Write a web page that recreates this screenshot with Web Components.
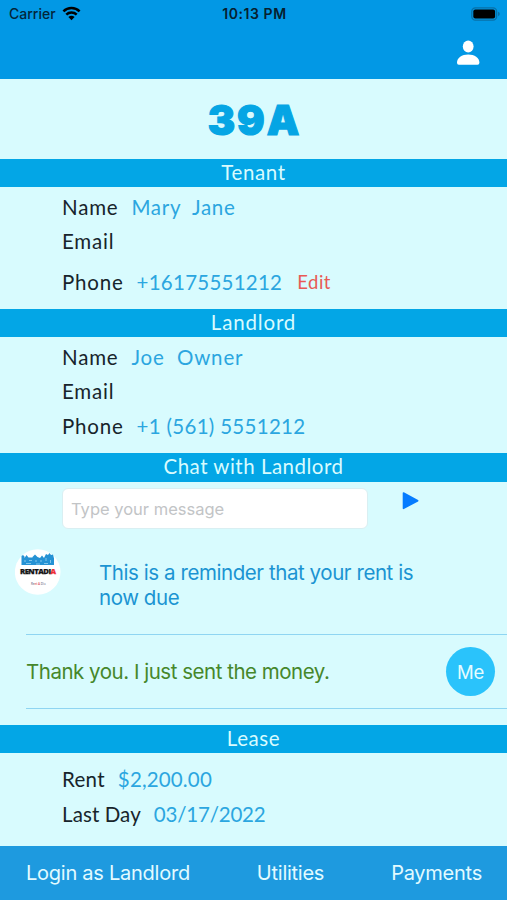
<!DOCTYPE html>
<html lang="en">
<head>
<meta charset="utf-8">
<title>Rentadia</title>
<style>
  body {
    margin: 0;
    background: #d8fbfe;
  }
</style>
</head>
<body>
<rent-app></rent-app>

<script>
// small helper, every element below is a template cloned in its shadow root
const define = (name, html) => {
    const template = document.createElement("template");
    template.innerHTML = html;
    customElements.define(name, class extends HTMLElement {
        constructor() {
            super();
            this.attachShadow({ mode: "open" });
            this.shadowRoot.appendChild(template.content.cloneNode(true));
        }
    });
};

define("status-bar", /*html*/`
  <style>
  :host {
    display: grid;
    grid-template-columns: 1fr auto 1fr;
    align-items: center;
    height: 28px;
    padding: 0 7px 0 9px;
    color: #03263a;
    font: 500 14px/28px Inter, sans-serif;
  }
  .carrier { display: flex; align-items: center; gap: 6px; }
  .time { font-weight: 600; color: #06202f; letter-spacing: 0.55px; }
  .battery { justify-self: end; }
  svg { display: block; margin-top: -1px; }
  </style>
  <div class="carrier">
    <span>Carrier</span>
    <svg width="19" height="15" viewBox="0 0 19 15">
      <g fill="none" stroke="#000" stroke-width="2.5">
        <path d="M1.400 5.300a11.600 11.600 0 0 1 16.200 0"/>
        <path d="M4.300 8.600a7.400 7.400 0 0 1 10.400 0"/>
      </g>
      <path d="M9.500 14.300 6.400 11.100a4.500 4.500 0 0 1 6.200 0Z" fill="#000"/>
    </svg>
  </div>
  <span class="time">10:13 PM</span>
  <svg class="battery" width="29" height="14" viewBox="0 0 29 14">
    <rect x=".8" y=".8" width="24.8" height="12.4" rx="3.6" fill="none" stroke="#0870a8" stroke-width="1.3"/>
    <rect x="2.3" y="2.4" width="21.8" height="9.2" rx="2" fill="#000"/>
    <path d="M27 4.800q1.800.6 1.800 2.200T27 9.200Z" fill="#0870a8"/>
  </svg>
`);

define("nav-bar", /*html*/`
  <style>
  :host {
    display: flex;
    justify-content: flex-end;
    height: 51px;
    padding: 12px 27px 0 0;
    box-sizing: border-box;
  }
  </style>
  <svg width="24" height="26" viewBox="0 0 24 26" fill="#fff">
    <ellipse cx="12.2" cy="6.5" rx="5.4" ry="5.9"/>
    <path d="M1 22.800C1 17.800 5.800 14.600 12.200 14.600S23.400 17.800 23.400 22.800Q23.400 24.800 21.600 24.800H2.800Q1 24.800 1 22.800Z"/>
  </svg>
`);

define("section-bar", /*html*/`
  <style>
  :host {
    display: block;
    height: 28.5px;
    background: #03a6e6;
    color: #d8fbfe;
    font: 400 20.5px/26px Lato, sans-serif;
    letter-spacing: var(--track, 0.6px);
    text-align: center;
  }
  </style>
  <slot></slot>
`);

define("info-row", /*html*/`
  <style>
  :host {
    display: flex;
    align-items: center;
    height: 34.5px;
    padding-left: 62px;
    color: #17242b;
    font: 400 20.5px/34px Lato, sans-serif;
    letter-spacing: var(--label-track, 0.8px);
    white-space: pre;
  }
  ::slotted([slot=value]) {
    margin-left: 13px;
    color: #2ba6e0;
    letter-spacing: var(--track, 0.7px);
  }
  ::slotted([slot=action]) {
    margin-left: 15px;
    color: #e85a55;
    font-size: 18.5px;
    letter-spacing: 0.5px;
  }
  </style>
  <slot></slot><slot name="value"></slot><slot name="action"></slot>
`);

define("message-box", /*html*/`
  <style>
  :host {
    display: flex;
    gap: 34px;
    padding: 6px 0 0 62px;
  }
  .field {
    box-sizing: border-box;
    width: 306px;
    height: 41.5px;
    padding-left: 8px;
    border: 1px solid #d9eff2;
    border-radius: 6px;
    background: #fff;
    color: #c2c4c6;
    font: 400 16.5px/41px Inter, sans-serif;
  }
  svg { margin-top: 3px; }
  </style>
  <div class="field"><slot></slot></div>
  <svg width="18" height="20" viewBox="0 0 18 20">
    <path d="M1.500 2 15.700 9.700 1.500 17.400Z" fill="#067cff" stroke="#067cff" stroke-width="1.6" stroke-linejoin="round"/>
  </svg>
`);

define("rentadia-logo", /*html*/`
  <style>
  :host { display: block; width: 46px; height: 46px; }
  svg { display: block; }
  </style>
  <svg width="46" height="46" viewBox="0 0 46 46">
    <circle cx="22.700" cy="23" r="22.800" fill="#fff"/>
    <path d="M6.500 16V7L8 6l1.500 1.500V9l2-3 2 2.500h4V8L20 5.500 22.500 8 25 9l2-2.500L29 9l2-4 2 1 1.500-2L36 6l2-.5 1 4V16Z" fill="#2592d4"/>
    <path d="M9 12h2M14 11.500h3M20 12h2M25 12h2M31 9v3M35.500 11v3M11 14.500h5M21 15h4M29 14.500h4" stroke="#a9dcf5" stroke-width=".7"/>
    <text x="5" y="25.300" font-family="Open Sans, sans-serif" font-weight="800" font-size="6.600" textLength="35.600" lengthAdjust="spacingAndGlyphs" fill="#151515" stroke="#151515" stroke-width=".25">RENTADI<tspan fill="#ee2b35" stroke="#ee2b35">A</tspan></text>
    <text x="16" y="35.500" font-family="Lato, sans-serif" font-weight="700" font-size="3" textLength="14" fill="#8e8ea0">Re<tspan fill="#e05a66">nt A</tspan> Dia</text>
  </svg>
`);

define("chat-message", /*html*/`
  <style>
  :host {
    display: flex;
    box-sizing: border-box;
    font: 400 20.5px/24.5px Inter, sans-serif;
  }
  :host([from=them]) {
    height: 105px;
    padding: 20px 80px 0 15px;
    gap: 38px;
    color: #1b94d2;
    letter-spacing: -0.43px;
  }
  :host([from=them]) .text { padding-top: 12px; }
  :host([from=me]) {
    height: 73px;
    padding: 12px 12px 0 26px;
    justify-content: space-between;
    color: #46872b;
    letter-spacing: -0.48px;
  }
  :host([from=me]) .text { padding-top: 13px; }
  .text { white-space: pre-line; }
  </style>
  <slot name="before"></slot>
  <div class="text"><slot></slot></div>
  <slot name="after"></slot>
`);

define("me-badge", /*html*/`
  <style>
  :host {
    display: block;
    width: 49px;
    height: 49px;
    border-radius: 50%;
    background: #2ac3fb;
    color: #e6fcff;
    font: 400 18.5px/51px Inter, sans-serif;
    letter-spacing: -0.2px;
    text-align: center;
  }
  </style>
  Me
`);

define("line-separator", /*html*/`
  <style>
  :host { display: block; height: 1px; margin-left: 26px; background: #8fd5f2; }
  </style>
`);

define("tab-bar", /*html*/`
  <style>
  :host {
    display: flex;
    justify-content: space-between;
    height: 54px;
    padding: 0 25px 0 26px;
    background: #1e9adf;
    color: #e2fbff;
    font: 400 20px/55px Inter, sans-serif;
    letter-spacing: -0.25px;
    white-space: nowrap;
  }
  </style>
  <slot></slot>
`);

define("rent-app", /*html*/`
  <style>
  :host {
    display: flex;
    flex-direction: column;
    width: 507px;
    height: 900px;
    overflow: hidden;
    background: #d8fbfe;
  }
  header { height: 79px; background: #0298e5; }
  h1 {
    margin: 0;
    height: 79.5px;
    color: #05a5e4;
    font: 900 41px/82px Inter, sans-serif;
    letter-spacing: 2px;
    text-indent: 2px;
    text-align: center;
    -webkit-text-stroke: 1.2px #05a5e4;
  }
  .rows { box-sizing: border-box; padding-top: 2.5px; }
  .tenant { height: 121.5px; }
  .landlord { height: 116px; }
  .chat { height: 243px; }
  .lease { height: 93px; padding-top: 9px; }
  .tall { height: 47px; }
  </style>
  <header>
    <status-bar></status-bar>
    <nav-bar></nav-bar>
  </header>
  <h1>39A</h1>

  <section-bar>Tenant</section-bar>
  <div class="rows tenant">
    <info-row>Name<span slot="value">Mary&nbsp; Jane</span></info-row>
    <info-row>Email</info-row>
    <info-row class="tall" style="--track: 0.25px">Phone<span slot="value">+16175551212</span><span slot="action">Edit</span></info-row>
  </div>

  <section-bar style="--track: 0.85px">Landlord</section-bar>
  <div class="rows landlord">
    <info-row style="--track: 0.85px">Name<span slot="value">Joe&nbsp; Owner</span></info-row>
    <info-row>Email</info-row>
    <info-row style="--track: 0.3px">Phone<span slot="value">+1 (561) 5551212</span></info-row>
  </div>

  <section-bar style="--track: 0.5px">Chat with Landlord</section-bar>
  <div class="chat">
    <message-box>Type your message</message-box>
    <chat-message from="them"><rentadia-logo slot="before"></rentadia-logo>This is a reminder that your rent is
now due</chat-message>
    <line-separator></line-separator>
    <chat-message from="me">Thank you. I just sent the money.<me-badge slot="after"></me-badge></chat-message>
    <line-separator></line-separator>
  </div>

  <section-bar>Lease</section-bar>
  <div class="rows lease">
    <info-row style="--label-track: 0.3px; --track: 0.15px">Rent<span slot="value">$2,200.00</span></info-row>
    <info-row style="--label-track: 0.1px; --track: -0.2px">Last Day<span slot="value">03/17/2022</span></info-row>
  </div>

  <tab-bar>
    <span>Login as Landlord</span>
    <span>Utilities</span>
    <span>Payments</span>
  </tab-bar>
`);
</script>
</body>
</html>
